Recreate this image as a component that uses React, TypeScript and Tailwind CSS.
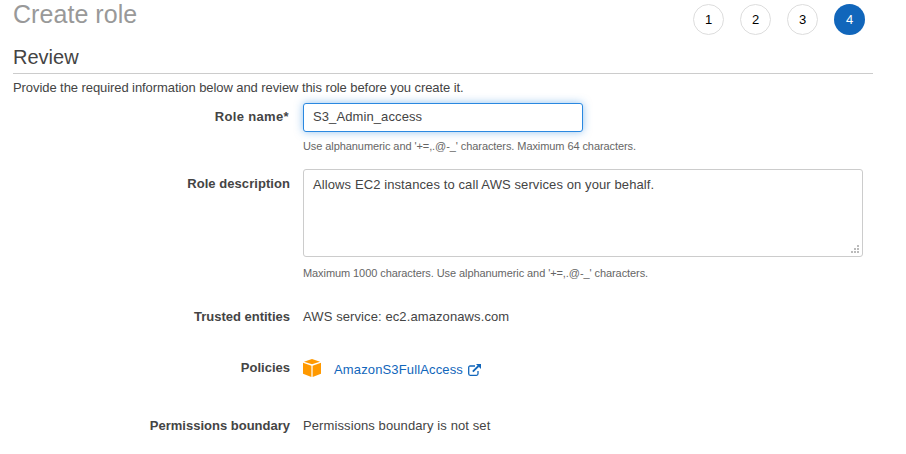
import type { ReactNode } from "react";

const steps = [1, 2, 3, 4];
const currentStep = 4;

function Field({ label, className, children }: { label: ReactNode; className: string; children: ReactNode }) {
  return (
    <div className={`flex gap-[13px] ${className}`}>
      <div className="w-[277px] shrink-0 text-right font-bold leading-5">{label}</div>
      <div className="w-[560px] leading-5 tracking-[0.1px]">{children}</div>
    </div>
  );
}

function CubeIcon() {
  return (
    <svg width="18" height="18" viewBox="0 0 18 19" preserveAspectRatio="none" fill="#ff9900" className="block shrink-0">
      <path d="M9 0 17 2.8 9 5.5 1 2.8z" />
      <path d="M0 4 8.4 7v12L0 15.6z" />
      <path d="M18 4 9.6 7v12L18 15.6z" />
    </svg>
  );
}

function ExternalLinkIcon() {
  return (
    <svg width="13" height="12" viewBox="0 0 13 12" fill="none" stroke="#1166bb" className="block shrink-0">
      <path d="M7 2H2.2Q.7 2 .7 3.5v6.3q0 1.5 1.5 1.5h6.3q1.5 0 1.5-1.5V7" strokeWidth="1.3" />
      <path d="M4.8 7.7 10.5 2" strokeWidth="1.8" />
      <path d="M8 0h5v5z" fill="#1166bb" stroke="none" />
    </svg>
  );
}

export default function App() {
  return (
    <main className="h-[454px] w-[906px] overflow-hidden bg-white pl-[13px] font-['Liberation_Sans',Arial,sans-serif] text-[13px] text-[#444444]">
      <header className="flex h-[44px] w-[852px] justify-between">
        <h1 className="text-[25px] leading-[29px] tracking-[0.05px] text-[#999999]">Create role</h1>
        <ol className="flex gap-4 pt-1">
          {steps.map((step) => (
            <li
              key={step}
              className={
                step === currentStep
                  ? "flex size-[31px] items-center justify-center rounded-full bg-[#1166bb] pt-px text-white"
                  : "flex size-[31px] items-center justify-center rounded-full border border-[#dddddd] pt-px text-black"
              }
            >
              {step}
            </li>
          ))}
        </ol>
      </header>

      <h2 className="h-[30px] w-[860px] border-b border-[#cccccc] text-[20px] leading-[26px]">Review</h2>
      <p className="h-[29px] pt-1 leading-5 tracking-[-0.075px]">
        Provide the required information below and review this role before you create it.
      </p>

      <Field label={<div className="pr-px pt-1 tracking-[0.35px]">Role name*</div>} className="h-[66px]">
        <input
          type="text"
          defaultValue="S3_Admin_access"
          className="block h-[29px] w-[280px] rounded-[3px] border border-[#2a88e0] bg-white px-[9px] pb-[3px] tracking-[0.1px] shadow-[0_0_8px_rgba(42,136,224,0.5)] outline-none"
        />
        <p className="pt-1 text-[11px] leading-5 tracking-[-0.08px] text-[#666666]">
          Use alphanumeric and '+=,.@-_' characters. Maximum 64 characters.
        </p>
      </Field>

      <Field label={<div className="pt-[5px] tracking-[0.06px]">Role description</div>} className="h-[138px]">
        <div className="relative h-[88px]">
          <textarea
            defaultValue="Allows EC2 instances to call AWS services on your behalf."
            className="block h-[88px] w-[560px] resize-none rounded-[3px] border border-[#cccccc] bg-white px-[9px] py-[5px] leading-5 tracking-[0.1px] outline-none"
          />
          <svg width="8" height="8" viewBox="0 0 8 8" fill="#bbbbbb" className="pointer-events-none absolute bottom-1 right-1">
            <path d="M6 0h2v2H6zM3 3h2v2H3zM6 3h2v2H6zM0 6h2v2H0zM3 6h2v2H3zM6 6h2v2H6z" />
          </svg>
        </div>
        <p className="pt-[6px] text-[11px] leading-5 tracking-[-0.08px] text-[#666666]">
          Maximum 1000 characters. Use alphanumeric and '+=,.@-_' characters.
        </p>
      </Field>

      <Field label="Trusted entities" className="h-[51px]">
        AWS service: ec2.amazonaws.com
      </Field>

      <Field label="Policies" className="h-[58px]">
        <div className="flex items-start pt-[1px]">
          <CubeIcon />
          <a href="#" className="ml-[13px] flex items-center gap-[5px] pt-px tracking-[0.14px] text-[#1166bb]">
            AmazonS3FullAccess
            <ExternalLinkIcon />
          </a>
        </div>
      </Field>

      <Field label="Permissions boundary" className="h-[30px]">
        Permissions boundary is not set
      </Field>
    </main>
  );
}
